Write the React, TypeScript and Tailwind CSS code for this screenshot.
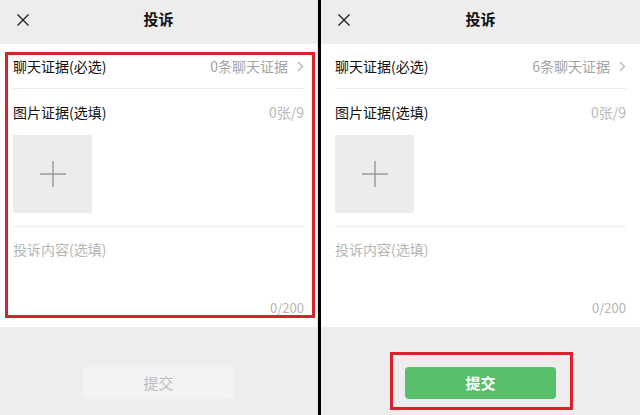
const font = { fontFamily: '"Noto Sans CJK SC", "Noto Sans", sans-serif' }

interface PanelProps {
  count: number,
  pad: string,
  active?: boolean,
}

function CloseIcon() {
  return (
    <svg width="14" height="14" viewBox="0 0 14 14" className="text-[#222]">
      <path d="M1.5 1.5 L12.5 12.5 M12.5 1.5 L1.5 12.5" stroke="currentColor" strokeWidth="1.4" fill="none" />
    </svg>
  )
}

function Chevron() {
  return (
    <svg width="7" height="11" viewBox="0 0 7 11" className="text-[#b4b4b4]">
      <path d="M1 1 L5.5 5.5 L1 10" stroke="currentColor" strokeWidth="1.3" fill="none" />
    </svg>
  )
}

function PlusIcon() {
  return (
    <svg width="28" height="28" viewBox="0 0 28 28" className="text-[#9a9a9a]">
      <path d="M14 1 V27 M1 14 H27" stroke="currentColor" strokeWidth="1.5" fill="none" />
    </svg>
  )
}

function Panel({ count, pad, active }: PanelProps) {
  return (
    <div className="relative flex h-full flex-col" style={font}>
      <header className="relative flex h-[44px] shrink-0 items-center justify-center bg-[#ededed] pb-[5px]">
        <div className="absolute left-[16px] top-[13px]">
          <CloseIcon />
        </div>
        <h1 className="text-[15px] font-bold text-[#111]">投诉</h1>
      </header>

      <div className={`flex h-[283px] shrink-0 flex-col bg-white ${pad}`}>
        <div className="flex h-[45px] items-center justify-between border-b border-[#ececec] pt-[1px]">
          <span className="text-[14px] text-[#111]">聊天证据(必选)</span>
          <span className="flex items-center gap-[9px] text-[14px] text-[#a3a3a3]">
            {count}条聊天证据
            <Chevron />
          </span>
        </div>

        <div className="flex h-[46px] items-center justify-between">
          <span className="text-[14px] text-[#111]">图片证据(选填)</span>
          <span className="text-[14px] text-[#b8b8b8]">0张/9</span>
        </div>
        <div className="border-b border-[#ececec] pb-[13px]">
          <div className="flex h-[78px] w-[79px] items-center justify-center bg-[#ececec]">
            <PlusIcon />
          </div>
        </div>

        <div className="flex flex-1 flex-col pt-[12px]">
          <span className="text-[14px] text-[#b5b5b5]">投诉内容(选填)</span>
          <span className="mt-auto mb-[10px] self-end text-[13px] text-[#b5b5b5]">0/200</span>
        </div>
      </div>

      <div className="flex flex-1 items-start justify-center bg-[#ededed] pt-[40px]">
        {active ? (
          <button className="h-[32px] w-[151px] rounded-[4px] bg-[#58be6b] text-[15px] font-bold text-white">
            提交
          </button>
        ) : (
          <button className="h-[32px] w-[151px] rounded-[4px] bg-[#f3f3f3] text-[15px] text-[#bcbcbc]">
            提交
          </button>
        )}
      </div>
    </div>
  )
}

export default function App() {
  return (
    <main className="flex h-[415px] w-[640px] overflow-hidden bg-white">
      <div className="relative w-[318px] shrink-0 border-r border-[#e2e2e2]">
        <Panel count={0} pad="px-[13px]" />
        {/* annotation box */}
        <div className="pointer-events-none absolute left-[5px] top-[52px] h-[266px] w-[310px] border-[3px] border-[#d8212b]" />
      </div>
      <div className="w-[3px] shrink-0 bg-black" />
      <div className="relative flex-1">
        <Panel count={6} pad="px-[14px]" active />
        <div className="pointer-events-none absolute left-[69px] top-[352px] h-[58px] w-[183px] border-[3px] border-[#d8212b]" />
      </div>
    </main>
  )
}
